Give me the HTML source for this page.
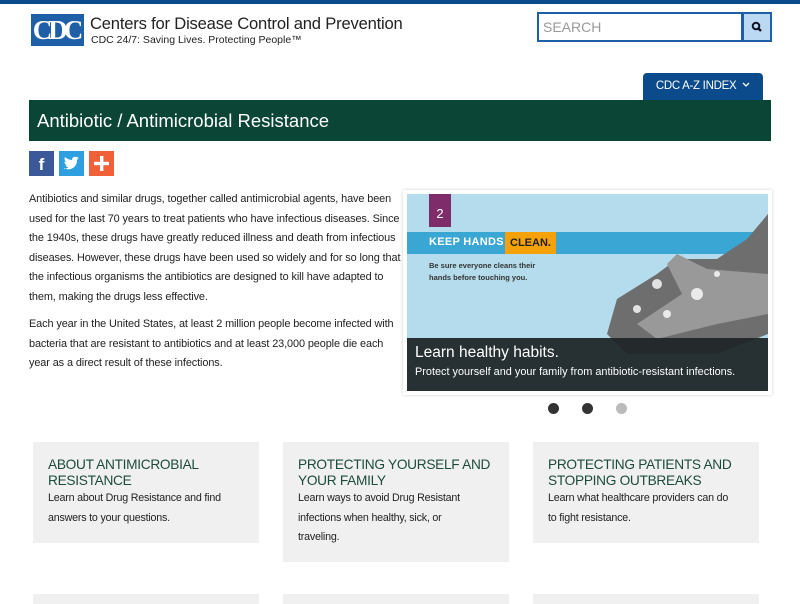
<!DOCTYPE html>
<html><head><style>
*{margin:0;padding:0;box-sizing:border-box}
body{width:800px;height:599px;overflow:hidden;background:#fff;font-family:"Liberation Sans",sans-serif;position:relative;color:#222}
.a{position:absolute}
.p{font-size:10.9px;line-height:19.5px;white-space:nowrap;letter-spacing:-0.1px;color:#222}
.box{position:absolute;background:#f0f0f0;top:442px;width:226px;padding:15px 15px}
.box h3{font-weight:normal;font-size:13.7px;line-height:15.5px;color:#1c4b3c;letter-spacing:-0.3px;white-space:nowrap}
.box p{font-size:10.7px;line-height:19.5px;color:#222;letter-spacing:-0.2px;margin-top:1px;white-space:nowrap}
</style></head><body>
<div class="a" style="left:0;top:0;width:800px;height:4px;background:#0b4b8c"></div>
<div class="a" style="left:31px;top:14px;width:53px;height:32px;background:#1f5fa8;color:#fff;font-family:'Liberation Serif',serif;font-weight:bold;font-size:27px;line-height:32px;text-align:center;letter-spacing:-4px;overflow:hidden;padding-right:3px">CDC</div>
<div class="a" style="left:90px;top:14px;font-size:16.6px;color:#222;letter-spacing:-0.2px">Centers for Disease Control and Prevention</div>
<div class="a" style="left:91px;top:34px;font-size:10.5px;color:#222">CDC 24/7: Saving Lives. Protecting People™</div>
<div class="a" style="left:537px;top:12px;width:206px;height:30px;border:2px solid #1f5fa8;background:#fff;color:#999;font-size:14px;line-height:26px;padding-left:4px">SEARCH</div>
<div class="a" style="left:742px;top:12px;width:30px;height:30px;border:2px solid #1f5fa8;background:#bcd9f3"><svg width="26" height="26" viewBox="0 0 26 26"><circle cx="12" cy="12" r="3.3" fill="none" stroke="#112" stroke-width="2"/><line x1="14.5" y1="14.5" x2="17" y2="17" stroke="#112" stroke-width="2.4"/></svg></div>
<div class="a" style="left:643px;top:73px;width:120px;height:27px;background:#0b4b8c;border-radius:4px 4px 0 0;color:#fff;font-size:11.5px;line-height:26px;text-align:center;letter-spacing:-0.3px">CDC A-Z INDEX &nbsp;<svg width="8" height="6" viewBox="0 0 8 6" style="vertical-align:1px"><path d="M1 1l3 3 3-3" fill="none" stroke="#fff" stroke-width="1.3"/></svg></div>
<div class="a" style="left:29px;top:100px;width:742px;height:41px;background:#0a4535;color:#fff;font-size:18.5px;line-height:41px;padding-left:8px">Antibiotic / Antimicrobial Resistance</div>
<div class="a" style="left:29px;top:151px;width:25px;height:25px;background:#3b5998;color:#fff;font-weight:bold;font-size:17px;text-align:center;line-height:27px">f</div>
<div class="a" style="left:59px;top:151px;width:25px;height:25px;background:#2ea0e0"><svg width="25" height="25" viewBox="0 0 25 25"><path d="M5 17c3 2 8 2 11-2 2-2 2-5 2-6l2-2-2 .5 1.5-2-2 .8C16 5 13 6 13 9 10 9 7 7 6 6c-1 2 0 4 1 5-1 0-1.5-.3-1.5-.3 0 2 1.5 3 2.5 3.5H6.5c.5 1.5 2 2 3 2-1.5 1.2-3 1.5-4.5 1.8z" fill="#fff"/></svg></div>
<div class="a" style="left:89px;top:151px;width:25px;height:25px;background:#f0613a"><svg width="25" height="25"><rect x="11" y="5" width="3.4" height="15" fill="#fff"/><rect x="5" y="10.8" width="15" height="3.4" fill="#fff"/></svg></div>
<div class="a p" style="left:29px;top:190px">Antibiotics and similar drugs, together called antimicrobial agents, have been<br>used for the last 70 years to treat patients who have infectious diseases. Since<br>the 1940s, these drugs have greatly reduced illness and death from infectious<br>diseases. However, these drugs have been used so widely and for so long that<br>the infectious organisms the antibiotics are designed to kill have adapted to<br>them, making the drugs less effective.</div>
<div class="a p" style="left:29px;top:315px">Each year in the United States, at least 2 million people become infected with<br>bacteria that are resistant to antibiotics and at least 23,000 people die each<br>year as a direct result of these infections.</div>
<div class="a" style="left:403px;top:190px;width:369px;height:205px;background:#fff;box-shadow:0 0 3px #ccc"></div>
<div class="a" style="left:407px;top:194px;width:361px;height:197px;background:#b4dcec;overflow:hidden">
 <div class="a" style="left:22px;top:0;width:22px;height:33px;background:#7e2d6a;color:#fff;font-size:13px;text-align:center;line-height:40px">2</div>
 <div class="a" style="left:0;top:38px;width:361px;height:22px;background:#3aa6d3"></div>
 <div class="a" style="left:22px;top:42px;color:#fff;font-weight:bold;font-size:11px;letter-spacing:0.3px">KEEP HANDS</div>
 <div class="a" style="left:98px;top:38px;width:51px;height:22px;background:#f5a20a;color:#222;font-weight:bold;font-size:11px;line-height:22px;padding-left:5px">CLEAN.</div>
 <div class="a" style="left:22px;top:66px;font-size:7.5px;line-height:12px;color:#333;font-weight:bold">Be sure everyone cleans their<br>hands before touching you.</div>
 <svg class="a" style="left:190px;top:20px" width="171" height="140"><path d="M171 0L150 25 120 45 80 45 60 60 20 85 10 120 30 140 120 140 171 120z" fill="#6e6e6e"/><path d="M171 60L110 55 80 40 70 50 85 80 40 110 60 125 120 110 171 100z" fill="#999"/><g fill="#fff" opacity=".8"><circle cx="60" cy="70" r="5"/><circle cx="40" cy="95" r="4"/><circle cx="100" cy="80" r="6"/><circle cx="120" cy="60" r="3"/><circle cx="70" cy="100" r="4"/></g></svg>
 <div class="a" style="left:0;top:144px;width:361px;height:53px;background:rgba(32,38,40,.95);color:#fff;padding:6px 8px">
  <div style="font-size:15.5px;line-height:18px">Learn healthy habits.</div>
  <div style="font-size:10.9px;line-height:16px;margin-top:2px;white-space:nowrap">Protect yourself and your family from antibiotic-resistant infections.</div>
 </div>
</div>
<div class="a" style="left:548px;top:403px;width:11px;height:11px;border-radius:50%;background:#333"></div>
<div class="a" style="left:582px;top:403px;width:11px;height:11px;border-radius:50%;background:#333"></div>
<div class="a" style="left:616px;top:403px;width:11px;height:11px;border-radius:50%;background:#bbb"></div>
<div class="box" style="left:33px;height:101px"><h3>ABOUT ANTIMICROBIAL<br>RESISTANCE</h3><p>Learn about Drug Resistance and find<br>answers to your questions.</p></div>
<div class="box" style="left:283px;height:120px"><h3>PROTECTING YOURSELF AND<br>YOUR FAMILY</h3><p>Learn ways to avoid Drug Resistant<br>infections when healthy, sick, or<br>traveling.</p></div>
<div class="box" style="left:533px;height:101px"><h3>PROTECTING PATIENTS AND<br>STOPPING OUTBREAKS</h3><p>Learn what healthcare providers can do<br>to fight resistance.</p></div>
<div class="a" style="left:33px;top:594px;width:226px;height:10px;background:#f0f0f0"></div>
<div class="a" style="left:283px;top:594px;width:226px;height:10px;background:#f0f0f0"></div>
<div class="a" style="left:533px;top:594px;width:226px;height:10px;background:#f0f0f0"></div>
</body></html>
